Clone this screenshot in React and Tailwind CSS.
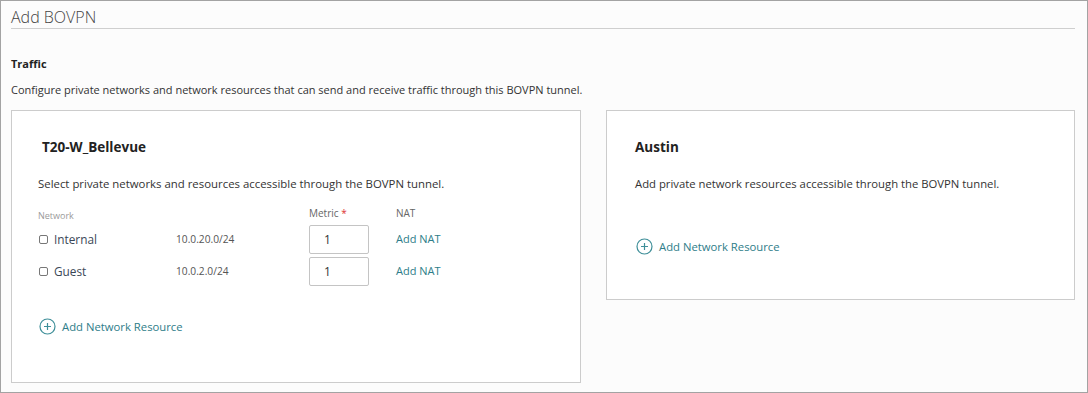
import React from "react";

const teal = "text-[#2e7d89]";

const PlusCircle = () => (
  <svg width="17" height="17" viewBox="0 0 17 17" className="shrink-0">
    <circle cx="8.5" cy="8.5" r="7.5" fill="none" stroke="#3f8f99" strokeWidth="1.2" />
    <path d="M8.5 5v7M5 8.5h7" stroke="#3f8f99" strokeWidth="1.2" />
  </svg>
);

const AddResource = () => (
  <div className="flex items-center gap-[6px]">
    <PlusCircle />
    <span className={`text-[11.3px] leading-[16px] ${teal}`}>Add Network Resource</span>
  </div>
);

const rows = [
  { name: "Internal", ip: "10.0.20.0/24" },
  { name: "Guest", ip: "10.0.2.0/24" },
];

const App = () => {
  return (
    <div
      className="w-[1088px] h-[393px] border border-[#a3a3a3] bg-[#fcfcfc] pl-[10px] pr-[12px] text-[#333]"
      style={{ fontFamily: '"Open Sans", "Noto Sans", sans-serif' }}
    >
      <div className="h-[28px] border-b border-[#cfcfcf] pt-[6px]">
        <h1 className="text-[16px] leading-[20px] font-light text-[#444]">Add BOVPN</h1>
      </div>

      <h2 className="mt-[28px] text-[11px] leading-[14px] font-bold text-[#222]">Traffic</h2>
      <p className="mt-[11px] text-[11px] leading-[16px] text-[#333]">
        Configure private networks and network resources that can send and receive traffic through this BOVPN tunnel.
      </p>

      <div className="mt-[12px] flex items-start gap-[25px]">
        {/* local gateway */}
        <div className="w-[570px] h-[273px] border border-[#cccccc] bg-white pl-[26px] pt-[27px]">
          <h3 className="ml-[4px] text-[13.5px] leading-[18px] font-bold text-[#222]">T20-W_Bellevue</h3>
          <p className="mt-[20px] text-[11.4px] leading-[16px]">
            Select private networks and resources accessible through the BOVPN tunnel.
          </p>

          <div className="mt-[14px] grid grid-cols-[138px_133px_87px_auto] items-end">
            <span className="text-[9px] leading-[12px] text-[#9a9a9a]">Network</span>
            <span />
            <span className="mb-[2px] text-[10px] leading-[14px] text-[#666]">
              Metric <span className="text-[#d33]">*</span>
            </span>
            <span className="mb-[2px] text-[10px] leading-[14px] text-[#666]">NAT</span>
          </div>

          <div className="mt-[3px] flex flex-col gap-[3px]">
            {rows.map((r) => (
              <div key={r.name} className="grid grid-cols-[138px_133px_87px_auto] items-center h-[29px]">
                <label className="flex items-center gap-[6px] text-[11.8px] text-[#3a4756]">
                  <span className="ml-[1px] w-[9px] h-[9px] border border-[#777] rounded-[2px] bg-white" />
                  {r.name}
                </label>
                <span className="text-[10.2px] text-[#555]">{r.ip}</span>
                <div className="w-[60px] h-[29px] border border-[#c4c4c4] rounded-[2px] bg-white flex items-center pl-[14px] text-[12px] text-[#333]">
                  1
                </div>
                <span className={`text-[11px] ${teal}`}>Add NAT</span>
              </div>
            ))}
          </div>

          <div className="mt-[32px] pl-[1px]">
            <AddResource />
          </div>
        </div>

        {/* remote gateway */}
        <div className="w-[469px] h-[190px] border border-[#cccccc] bg-white pl-[28px] pt-[27px]">
          <h3 className="text-[13.5px] leading-[18px] font-bold text-[#222]">Austin</h3>
          <p className="mt-[20px] text-[11.3px] leading-[16px]">
            Add private network resources accessible through the BOVPN tunnel.
          </p>
          <div className="mt-[46px] pl-[1px]">
            <AddResource />
          </div>
        </div>
      </div>
    </div>
  );
};

export default App;
